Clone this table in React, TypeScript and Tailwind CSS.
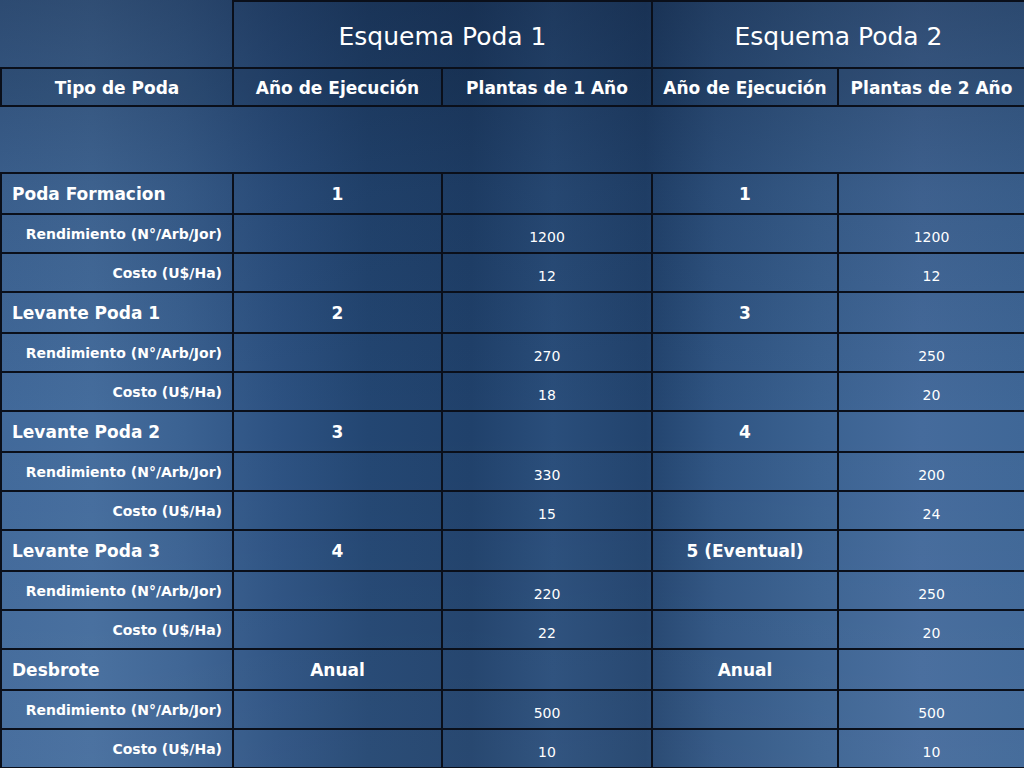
import React from 'react';

type Group = {
  name: string;
  e1: string;
  e2: string;
  rend: [string, string];
  costo: [string, string];
};

const groups: Group[] = [
  { name: 'Poda Formacion', e1: '1', e2: '1', rend: ['1200', '1200'], costo: ['12', '12'] },
  { name: 'Levante Poda 1', e1: '2', e2: '3', rend: ['270', '250'], costo: ['18', '20'] },
  { name: 'Levante Poda 2', e1: '3', e2: '4', rend: ['330', '200'], costo: ['15', '24'] },
  { name: 'Levante Poda 3', e1: '4', e2: '5 (Eventual)', rend: ['220', '250'], costo: ['22', '20'] },
  { name: 'Desbrote', e1: 'Anual', e2: 'Anual', rend: ['500', '500'], costo: ['10', '10'] },
];

const cell = 'border-2 border-[#0a0f1a] p-0';

const SubRow = ({ label, values }: { label: string; values: [string, string] }) => (
  <tr className="h-[39px]">
    <td className={`${cell} text-right pr-[10px] text-[14px] pt-[1px]`}>{label}</td>
    <td className={cell}></td>
    <td className={`${cell} text-center text-[14px] font-normal pt-[7px]`}>{values[0]}</td>
    <td className={cell}></td>
    <td className={`${cell} text-center text-[14px] font-normal pt-[7px]`}>{values[1]}</td>
  </tr>
);

export default function App() {
  return (
    <div className="relative w-[1024px] h-[768px] overflow-hidden bg-[linear-gradient(90deg,#41699a_0%,#456d9d_9%,#3b6292_18%,#2d5282_27%,#234672_36%,#20416b_46%,#2a4e7b_54%,#22436d_63%,#305583_70%,#3b6291_80%,#456b9c_90%,#3f6797_100%)]">
      <div className="absolute inset-0 bg-[linear-gradient(180deg,rgba(8,18,38,0.35)_0%,rgba(8,18,38,0.12)_25%,rgba(8,18,38,0)_55%,rgba(255,255,255,0.04)_100%)]" />
      <table
        className="relative w-[1024px] border-collapse table-fixed text-white font-bold"
        style={{ fontFamily: '"Comic Sans MS", "DejaVu Sans", sans-serif' }}
      >
        <colgroup>
          <col className="w-[232px]" />
          <col className="w-[209px]" />
          <col className="w-[210px]" />
          <col className="w-[186px]" />
          <col className="w-[187px]" />
        </colgroup>
        <tbody>
          <tr className="h-[67px]">
            <td className="p-0 border-b-2 border-r-2 border-[#0a0f1a]"></td>
            <td colSpan={2} className={`${cell} text-center text-[25px] font-normal pt-[4px]`}>
              Esquema Poda 1
            </td>
            <td colSpan={2} className={`${cell} text-center text-[25px] font-normal pt-[4px]`}>
              Esquema Poda 2
            </td>
          </tr>
          <tr className="h-[38px] bg-[rgba(10,25,50,0.1)]">
            <td className={`${cell} text-center text-[17px] pt-[3px]`}>Tipo de Poda</td>
            <td className={`${cell} text-center text-[17px] pt-[3px]`}>Año de Ejecución</td>
            <td className={`${cell} text-center text-[17px] pt-[3px]`}>Plantas de 1 Año</td>
            <td className={`${cell} text-center text-[17px] pt-[3px]`}>Año de Ejecución</td>
            <td className={`${cell} text-center text-[17px] pt-[3px]`}>Plantas de 2 Año</td>
          </tr>
          <tr className="h-[67px]">
            <td colSpan={5} className="p-0"></td>
          </tr>
          {groups.map((g) => (
            <React.Fragment key={g.name}>
              <tr className="h-[41px]">
                <td className={`${cell} text-left pl-[10px] text-[17px] pt-[3px]`}>{g.name}</td>
                <td className={`${cell} text-center text-[17px] pt-[3px]`}>{g.e1}</td>
                <td className={cell}></td>
                <td className={`${cell} text-center text-[17px] pt-[3px]`}>{g.e2}</td>
                <td className={cell}></td>
              </tr>
              <SubRow label="Rendimiento (N°/Arb/Jor)" values={g.rend} />
              <SubRow label="Costo (U$/Ha)" values={g.costo} />
            </React.Fragment>
          ))}
        </tbody>
      </table>
    </div>
  );
}
